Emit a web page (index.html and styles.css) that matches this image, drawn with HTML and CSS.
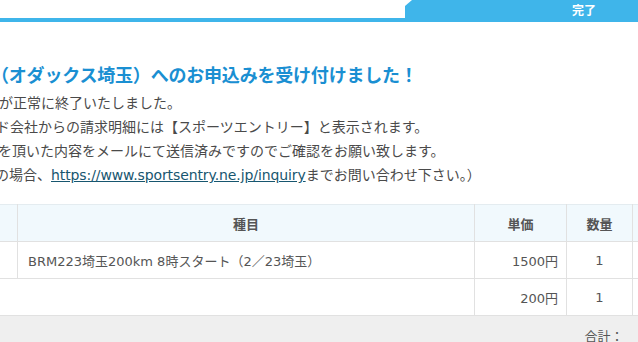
FILE: index.html
```html
<!DOCTYPE html>
<html lang="ja">
<head>
<meta charset="utf-8">
<link rel="stylesheet" href="styles.css">
</head>
<body>
<div class="page">
  <div class="topbar">
    <div class="topbar-space"></div>
    <div class="tab"><span class="tab-label">完了</span></div>
  </div>
  <div class="topline"></div>

  <div class="message">
    <h1 class="title">（オダックス埼玉）へのお申込みを受け付けました！</h1>
    <p class="line cut1">が正常に終了いたしました。</p>
    <p class="line cut4">ド会社からの請求明細には【スポーツエントリー】と表示されます。</p>
    <p class="line cut2">を頂いた内容をメールにて送信済みですのでご確認をお願い致します。</p>
    <p class="line cut5">の場合、<a class="link" href="#">https://www.sportsentry.ne.jp/inquiry</a>までお問い合わせ下さい。）</p>
  </div>

  <div class="table-wrap">
    <table class="order">
      <colgroup>
        <col class="c0"><col class="c1"><col class="c2"><col class="c3"><col class="c4">
      </colgroup>
      <thead>
        <tr>
          <th></th>
          <th>種目</th>
          <th>単価</th>
          <th>数量</th>
          <th></th>
        </tr>
      </thead>
      <tbody>
        <tr>
          <td></td>
          <td class="name">BRM223埼玉200km 8時スタート（2／23埼玉）</td>
          <td class="price">1500円</td>
          <td class="qty">1</td>
          <td></td>
        </tr>
        <tr>
          <td colspan="2"></td>
          <td class="price">200円</td>
          <td class="qty">1</td>
          <td></td>
        </tr>
      </tbody>
      <tfoot>
        <tr>
          <td colspan="4" class="total">合計：</td>
          <td class="total-end"></td>
        </tr>
      </tfoot>
    </table>
  </div>
</div>
</body>
</html>
```

FILE: styles.css
```css
html, body {
  margin: 0;
  padding: 0;
  background: #ffffff;
}

body {
  font-family: "DejaVu Sans", "Noto Sans CJK JP", sans-serif;
  color: #4a4a4a;
}

.page {
  width: 638px;
  height: 342px;
  overflow: hidden;
}

.topbar {
  display: flex;
  height: 18px;
}

.topbar-space {
  flex: 1;
}

.tab {
  width: 233px;
  background: #3fb5ea;
  clip-path: polygon(0 6px, 7px 0, 100% 0, 100% 100%, 0 100%);
  display: flex;
  align-items: center;
  padding-left: 167px;
  box-sizing: border-box;
}

.tab-label {
  color: #ffffff;
  font-family: "Noto Sans CJK JP", sans-serif;
  font-size: 12px;
  font-weight: bold;
  line-height: 18px;
  padding-top: 1px;
}

.topline {
  height: 4px;
  background: #3fb5ea;
}

.message {
  padding-top: 40px;
}

.title {
  margin: 0 0 5px 0;
  font-family: "Noto Sans CJK JP", sans-serif;
  font-size: 18px;
  line-height: 24px;
  font-weight: bold;
  color: #1a8fd2;
  text-indent: -9px;
  letter-spacing: -0.2px;
  white-space: nowrap;
}

.line {
  margin: 0;
  font-size: 14px;
  line-height: 24px;
  white-space: nowrap;
  color: #4a4a4a;
}

.cut1 { text-indent: -1px; }
.cut2 { text-indent: -2px; }
.cut4 { text-indent: -4px; }
.cut5 { text-indent: -5px; }

.link {
  color: #17566f;
  text-decoration: underline;
  letter-spacing: -0.1px;
}

.table-wrap {
  margin-top: 17px;
  margin-left: -60px;
}

.order {
  border-collapse: collapse;
  table-layout: fixed;
  width: 760px;
  font-size: 13px;
  color: #555555;
}

.c0 { width: 77px; }
.c1 { width: 457px; }
.c2 { width: 92px; }
.c3 { width: 66px; }
.c4 { width: 68px; }

.order th,
.order td {
  height: 37px;
  padding: 0 8px;
  border: 1px solid #e1e1e1;
  white-space: nowrap;
  box-sizing: border-box;
}

.order thead th {
  background: #f1f9fd;
  border-top: 1px solid #e4ecf0;
  font-family: "Noto Sans CJK JP", sans-serif;
  font-weight: bold;
  font-size: 13px;
  color: #555555;
  text-align: center;
}

.order .name {
  text-align: left;
  padding-left: 10px;
}

.order .price {
  text-align: right;
  padding-right: 8px;
}

.order .qty {
  text-align: center;
}

.order tfoot td {
  background: #efefef;
  border-left: none;
  border-right: none;
  border-bottom: none;
  height: 30px;
  vertical-align: bottom;
}

.order .total {
  text-align: right;
  padding-right: 9px;
  font-family: "Noto Sans CJK JP", sans-serif;
  font-size: 13px;
  line-height: 20px;
  padding-bottom: 0;
}
```
